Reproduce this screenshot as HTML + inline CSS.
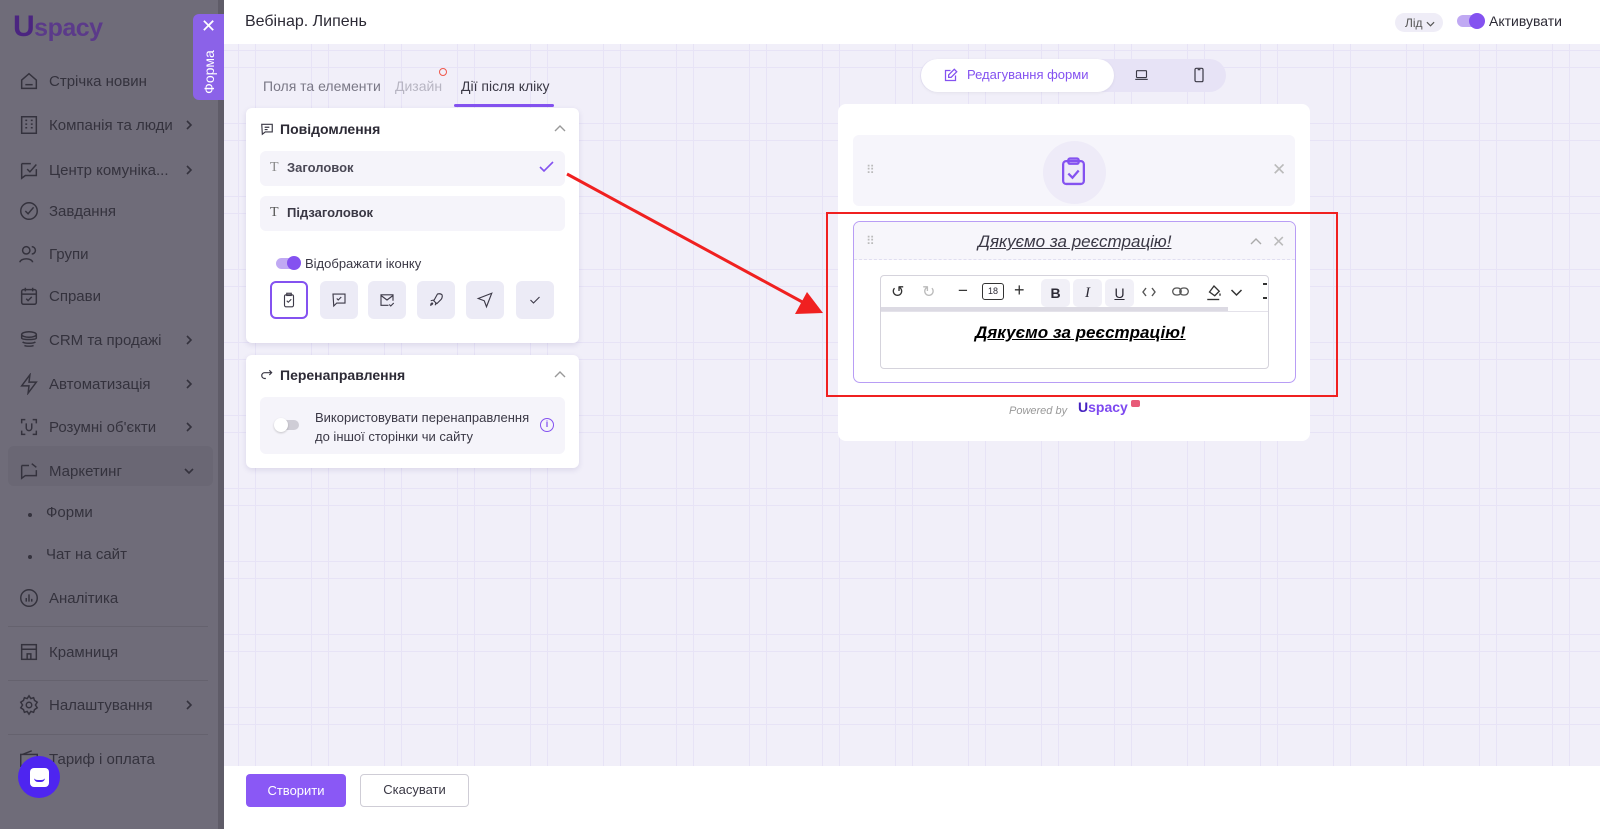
<!DOCTYPE html>
<html><head><meta charset="utf-8">
<style>
*{box-sizing:border-box;margin:0;padding:0}
body{width:1600px;height:829px;overflow:hidden;font-family:"Liberation Sans","Noto Sans CJK SC",sans-serif;background:#f1eff9;position:relative;color:#2c2a35}
.grid{position:absolute;left:224px;top:44px;right:0;bottom:0;
background-image:
linear-gradient(90deg,transparent 13px,#e7e3f6 13px,#e7e3f6 14px,transparent 14px,transparent 30px,#e7e3f6 30px,#e7e3f6 31px,transparent 31px),
linear-gradient(180deg,transparent 12px,#e7e3f6 12px,#e7e3f6 13px,transparent 13px,transparent 29px,#e7e3f6 29px,#e7e3f6 30px,transparent 30px);
background-size:73px 73px;background-position:1px 0,0 -6px}
.side{position:absolute;left:0;top:0;width:224px;height:829px;background:#6f6c79;color:#34323d;font-size:15px}
.side .scroll{position:absolute;left:218px;top:0;width:6px;height:829px;background:#5f5c68}
.nav{position:absolute;left:18px;display:flex;align-items:center;gap:9px}
.nav svg{width:22px;height:22px;stroke:#34323d;fill:none;stroke-width:1.6}
.chev{position:absolute;left:183px;width:12px;height:12px}
.sep{position:absolute;left:8px;width:200px;height:1px;background:#65626e}
.tabform{position:absolute;left:193px;top:14px;width:31px;height:86px;background:#8b62e8;border-radius:6px 0 0 6px;color:#fff}
.header{position:absolute;left:224px;top:0;right:0;height:44px;background:#fff}
.panel{position:absolute;background:#fff;border-radius:6px;box-shadow:0 2px 6px rgba(60,40,120,.12)}
.row{position:absolute;background:#f5f4fa;border-radius:6px}
.ib{position:absolute;top:281px;width:38px;height:38px;border-radius:6px;background:#ecebf6;display:flex;align-items:center;justify-content:center}
.ib svg{width:18px;height:18px;stroke:#3d3a48;fill:none;stroke-width:1.5}
.bot{position:absolute;left:224px;top:766px;right:0;height:63px;background:#fff}
</style></head><body>
<div class="grid"></div>
<div class="header">
 <div style="position:absolute;left:21px;top:13px;font-size:16px;color:#2c2a35">Вебінар. Липень</div>
 <div style="position:absolute;left:1171px;top:13px;width:48px;height:19px;border-radius:10px;background:#efedf7;font-size:12px;color:#555;padding:3px 0 0 10px">Лід <svg width="9" height="6" viewBox="0 0 10 6" fill="none" stroke="#555" stroke-width="1.3"><path d="M1 1l4 4 4-4"/></svg></div>
 <div style="position:absolute;left:1233px;top:15px;width:26px;height:12px;border-radius:6px;background:#c0a9f3"></div>
 <div style="position:absolute;left:1245px;top:13px;width:16px;height:16px;border-radius:50%;background:#8452f0"></div>
 <div style="position:absolute;left:1265px;top:13px;font-size:14px;color:#2c2a35">Активувати</div>
</div>

<div class="side">
 <div style="position:absolute;left:13px;top:10px;font-size:25px;font-weight:bold;color:#4a2a7c;letter-spacing:-0.5px"><span style="font-size:30px;color:#4b2580">U</span><span style="color:#5b3a8a">spacy</span></div>
 <div class="nav" style="top:70px"><svg viewBox="0 0 24 24"><path d="M4 11l8-7 8 7v9H4z"/><path d="M8 16h8"/></svg>Стрічка новин</div>
 <div class="nav" style="top:114px"><svg viewBox="0 0 24 24"><rect x="4" y="3" width="16" height="18"/><path d="M8 7h2M14 7h2M8 11h2M14 11h2M8 15h2M14 15h2"/></svg>Компанія та люди</div><svg class="chev" style="top:119px" viewBox="0 0 12 12" fill="none" stroke="#34323d" stroke-width="1.6"><path d="M4 2l4 4-4 4"/></svg>
 <div class="nav" style="top:159px"><svg viewBox="0 0 24 24"><path d="M4 5h10M4 5v16l4-3h12V11"/><path d="M10 11l3 3 7-8"/></svg>Центр комуніка...</div><svg class="chev" style="top:164px" viewBox="0 0 12 12" fill="none" stroke="#34323d" stroke-width="1.6"><path d="M4 2l4 4-4 4"/></svg>
 <div class="nav" style="top:200px"><svg viewBox="0 0 24 24"><circle cx="12" cy="12" r="9"/><path d="M8 12l3 3 6-7"/></svg>Завдання</div>
 <div class="nav" style="top:243px"><svg viewBox="0 0 24 24"><circle cx="9" cy="8" r="4"/><path d="M2 21c1-5 13-5 14 0M15 4a4 4 0 010 8"/></svg>Групи</div>
 <div class="nav" style="top:285px"><svg viewBox="0 0 24 24"><rect x="4" y="5" width="16" height="16" rx="2"/><path d="M8 3v4M16 3v4M4 10h16M9 15l2 2 4-4"/></svg>Справи</div>
 <div class="nav" style="top:329px"><svg viewBox="0 0 24 24"><ellipse cx="12" cy="6" rx="8" ry="3"/><path d="M4 6v4c0 2 16 2 16 0V6M5 14c2 2 12 2 14 0M7 18c2 1 8 1 10 0"/></svg>CRM та продажі</div><svg class="chev" style="top:334px" viewBox="0 0 12 12" fill="none" stroke="#34323d" stroke-width="1.6"><path d="M4 2l4 4-4 4"/></svg>
 <div class="nav" style="top:373px"><svg viewBox="0 0 24 24"><path d="M13 2L4 14h8l-1 8 9-12h-8z"/></svg>Автоматизація</div><svg class="chev" style="top:378px" viewBox="0 0 12 12" fill="none" stroke="#34323d" stroke-width="1.6"><path d="M4 2l4 4-4 4"/></svg>
 <div class="nav" style="top:416px"><svg viewBox="0 0 24 24"><path d="M4 8V4h4M16 4h4v4M20 16v4h-4M8 20H4v-4M9 8v5a3 3 0 006 0V8"/></svg>Розумні об'єкти</div><svg class="chev" style="top:421px" viewBox="0 0 12 12" fill="none" stroke="#34323d" stroke-width="1.6"><path d="M4 2l4 4-4 4"/></svg>
 <div style="position:absolute;left:8px;top:446px;width:205px;height:40px;background:#6a6774;border-radius:6px"></div>
 <div class="nav" style="top:460px"><svg viewBox="0 0 24 24"><path d="M4 6h8M4 6v14l4-3h12v-6"/><path d="M15 4l5 4"/></svg>Маркетинг</div><svg class="chev" style="top:465px" viewBox="0 0 12 12" fill="none" stroke="#34323d" stroke-width="1.6"><path d="M2 4l4 4 4-4"/></svg>
 <div style="position:absolute;left:28px;top:513px;width:4px;height:4px;border-radius:50%;background:#34323d"></div><div style="position:absolute;left:46px;top:504px">Форми</div>
 <div style="position:absolute;left:28px;top:555px;width:4px;height:4px;border-radius:50%;background:#34323d"></div><div style="position:absolute;left:46px;top:546px">Чат на сайт</div>
 <div class="nav" style="top:587px"><svg viewBox="0 0 24 24"><circle cx="12" cy="12" r="9"/><path d="M9 16v-4M12 16V8M15 16v-3"/></svg>Аналітика</div>
 <div class="sep" style="top:626px"></div>
 <div class="nav" style="top:641px"><svg viewBox="0 0 24 24"><rect x="4" y="4" width="16" height="16"/><path d="M4 9h16M10 20v-6h4v6"/></svg>Крамниця</div>
 <div class="sep" style="top:680px"></div>
 <div class="nav" style="top:694px"><svg viewBox="0 0 24 24"><circle cx="12" cy="12" r="3"/><path d="M12 2l2 3 3-1 1 3 3 2-2 3 2 3-3 2-1 3-3-1-2 3-2-3-3 1-1-3-3-2 2-3-2-3 3-2 1-3 3 1z"/></svg>Налаштування</div><svg class="chev" style="top:699px" viewBox="0 0 12 12" fill="none" stroke="#34323d" stroke-width="1.6"><path d="M4 2l4 4-4 4"/></svg>
 <div class="sep" style="top:734px"></div>
 <div class="nav" style="top:748px"><svg viewBox="0 0 24 24"><rect x="3" y="7" width="18" height="13"/><path d="M5 7l10-4"/></svg>Тариф і оплата</div>
 <div style="position:absolute;left:18px;top:756px;width:42px;height:42px;border-radius:50%;background:#4e25f0;display:flex;align-items:center;justify-content:center"><div style="width:19px;height:19px;background:#fff;border-radius:4px;position:relative"><div style="position:absolute;left:4px;top:10px;width:11px;height:4px;border-bottom:2px solid #4e25f0;border-radius:0 0 6px 6px"></div></div></div>
 <div class="scroll"></div>
</div>
<div class="tabform">
 <div style="position:absolute;left:8px;top:2px;font-size:18px">✕</div>
 <div style="position:absolute;left:-14px;top:50px;transform:rotate(-90deg);font-size:14px;width:60px;text-align:center">Форма</div>
</div>

<!-- tabs -->
<div style="position:absolute;left:263px;top:78px;font-size:14px;color:#7a7886">Поля та елементи</div>
<div style="position:absolute;left:395px;top:78px;font-size:14px;color:#b7b5c2">Дизайн</div>
<div style="position:absolute;left:439px;top:68px;width:8px;height:8px;border:1.5px solid #f0584b;border-radius:50%"></div>
<div style="position:absolute;left:461px;top:78px;font-size:14px;color:#3a3845">Дії після кліку</div>
<div style="position:absolute;left:454px;top:104px;width:100px;height:3px;background:#8452f0;border-radius:2px"></div>

<div class="panel" style="left:246px;top:108px;width:333px;height:235px">
 <svg style="position:absolute;left:14px;top:14px" width="14" height="14" viewBox="0 0 24 24" fill="none" stroke="#3a3845" stroke-width="2"><path d="M3 4h18v13H9l-5 4z"/><path d="M8 9h8M8 13h5"/></svg>
 <div style="position:absolute;left:34px;top:13px;font-size:14px;font-weight:bold;color:#2c2a35">Повідомлення</div>
 <svg style="position:absolute;left:308px;top:16px" width="12" height="8" viewBox="0 0 12 8" fill="none" stroke="#999" stroke-width="1.4"><path d="M1 7l5-5 5 5"/></svg>
 <div class="row" style="left:14px;top:43px;width:305px;height:35px"><span style="position:absolute;left:10px;top:9px;font-family:'Liberation Serif',serif;color:#888;font-size:14px">T</span><span style="position:absolute;left:27px;top:9px;font-size:13px;font-weight:bold;color:#4a4855">Заголовок</span><svg style="position:absolute;left:279px;top:10px" width="15" height="12" viewBox="0 0 15 12" fill="none" stroke="#8452f0" stroke-width="1.6"><path d="M1 6l4 4 9-9"/></svg></div>
 <div class="row" style="left:14px;top:88px;width:305px;height:35px"><span style="position:absolute;left:10px;top:9px;font-family:'Liberation Serif',serif;color:#555;font-size:14px">T</span><span style="position:absolute;left:27px;top:9px;font-size:13px;font-weight:bold;color:#3a3845">Підзаголовок</span></div>
 <div style="position:absolute;left:30px;top:150px;width:24px;height:11px;border-radius:6px;background:#c0a9f3"></div>
 <div style="position:absolute;left:41px;top:148px;width:14px;height:14px;border-radius:50%;background:#8452f0"></div>
 <div style="position:absolute;left:59px;top:148px;font-size:13px;color:#3a3845">Відображати іконку</div>
</div>
<div class="ib" style="left:270px;background:#fff;border:2px solid #8452f0"><svg viewBox="0 0 24 24"><rect x="6" y="5" width="12" height="16" rx="2"/><rect x="9" y="3" width="6" height="3"/><path d="M9 13l2 2 4-4"/></svg></div>
<div class="ib" style="left:320px"><svg viewBox="0 0 24 24"><path d="M4 4h16v12H9l-4 4z"/><path d="M9 10l2 2 4-4"/></svg></div>
<div class="ib" style="left:368px"><svg viewBox="0 0 24 24"><path d="M20 13V5H4v14h10"/><path d="M4 6l8 6 8-6M15 18l2 2 4-4"/></svg></div>
<div class="ib" style="left:417px"><svg viewBox="0 0 24 24"><path d="M14 4c4-1 6 1 6 1s1 3-1 6l-6 6-4-4z"/><path d="M9 12l-4 1M12 15l-1 4M5 19c0-2 1-3 2-3s1 2-2 3z"/></svg></div>
<div class="ib" style="left:466px"><svg viewBox="0 0 24 24"><path d="M21 3L3 10l8 3 3 8z"/></svg></div>
<div class="ib" style="left:516px"><svg viewBox="0 0 24 24"><path d="M6 12l4 4 8-8"/></svg></div>

<div class="panel" style="left:246px;top:355px;width:333px;height:113px">
 <svg style="position:absolute;left:14px;top:13px" width="14" height="14" viewBox="0 0 24 24" fill="none" stroke="#3a3845" stroke-width="2"><path d="M20 8H8a5 5 0 000 10h2M16 4l4 4-4 4"/></svg>
 <div style="position:absolute;left:34px;top:12px;font-size:14px;font-weight:bold;color:#2c2a35">Перенаправлення</div>
 <svg style="position:absolute;left:308px;top:15px" width="12" height="8" viewBox="0 0 12 8" fill="none" stroke="#999" stroke-width="1.4"><path d="M1 7l5-5 5 5"/></svg>
 <div class="row" style="left:14px;top:42px;width:305px;height:57px">
  <div style="position:absolute;left:17px;top:23px;width:22px;height:10px;border-radius:5px;background:#cfcdd6"></div>
  <div style="position:absolute;left:14px;top:21px;width:14px;height:14px;border-radius:50%;background:#fff;box-shadow:0 1px 2px rgba(0,0,0,.2)"></div>
  <div style="position:absolute;left:55px;top:11px;font-size:13px;color:#3a3845;line-height:19px">Використовувати перенаправлення<br>до іншої сторінки чи сайту</div>
  <div style="position:absolute;left:280px;top:21px;width:14px;height:14px;border:1.5px solid #8452f0;border-radius:50%;font-size:9px;color:#8452f0;text-align:center;line-height:11px;font-weight:bold">i</div>
 </div>
</div>

<!-- preview toolbar -->
<div style="position:absolute;left:920px;top:59px;width:306px;height:33px;border-radius:17px;background:#e7e3f6"></div>
<div style="position:absolute;left:921px;top:59px;width:193px;height:33px;border-radius:17px;background:#fff;box-shadow:0 1px 3px rgba(0,0,0,.06)">
 <svg style="position:absolute;left:22px;top:9px" width="15" height="15" viewBox="0 0 24 24" fill="none" stroke="#8452f0" stroke-width="2"><path d="M12 4H4v16h16v-8"/><path d="M18 2l4 4-9 9H9v-4z"/></svg>
 <div style="position:absolute;left:46px;top:8px;font-size:13px;color:#8452f0">Редагування форми</div>
</div>
<svg style="position:absolute;left:1134px;top:68px" width="15" height="14" viewBox="0 0 24 20" fill="none" stroke="#3a3845" stroke-width="1.8"><rect x="4" y="3" width="16" height="11" rx="1"/><path d="M2 17h20"/></svg>
<svg style="position:absolute;left:1192px;top:67px" width="14" height="16" viewBox="0 0 20 24" fill="none" stroke="#3a3845" stroke-width="1.8"><rect x="4" y="2" width="12" height="20" rx="2"/><path d="M8 4h4"/></svg>

<div style="position:absolute;left:838px;top:104px;width:472px;height:337px;background:#fff;border-radius:8px"></div>
<div style="position:absolute;left:853px;top:135px;width:442px;height:71px;background:#f6f5fb;border-radius:6px"></div>
<div style="position:absolute;left:866px;top:163px;color:#bbb;font-size:12px;letter-spacing:-1px">⠿</div>
<div style="position:absolute;left:1043px;top:141px;width:63px;height:63px;border-radius:50%;background:#eeebf8"></div>
<svg style="position:absolute;left:1061px;top:157px" width="25" height="29" viewBox="0 0 24 28" fill="none" stroke="#8452f0" stroke-width="2.2"><rect x="2" y="4" width="20" height="22" rx="3"/><rect x="7" y="1.5" width="10" height="5" rx="1.5"/><path d="M7 16l4 4 6-7"/></svg>
<div style="position:absolute;left:1272px;top:160px;font-size:17px;color:#bbb">✕</div>

<div style="position:absolute;left:853px;top:221px;width:443px;height:162px;border:1.5px solid #b89df5;border-radius:7px;background:#fff"></div>
<div style="position:absolute;left:854px;top:222px;width:441px;height:38px;background:#f7f6fb;border-bottom:1px dashed #e0def0;border-radius:6px 6px 0 0"></div>
<div style="position:absolute;left:866px;top:234px;color:#bbb;font-size:12px">⠿</div>
<div style="position:absolute;left:978px;top:232px;font-size:17px;font-style:italic;text-decoration:underline;color:#3a3845">Дякуємо за реєстрацію!</div>
<svg style="position:absolute;left:1250px;top:237px" width="12" height="8" viewBox="0 0 12 8" fill="none" stroke="#aaa" stroke-width="1.4"><path d="M1 7l5-5 5 5"/></svg>
<div style="position:absolute;left:1272px;top:232px;font-size:16px;color:#bbb">✕</div>
<div style="position:absolute;left:880px;top:275px;width:389px;height:94px;border:1px solid #d5d3dc;border-radius:4px;background:#fff"></div>
<div style="position:absolute;left:881px;top:307px;width:347px;height:4px;background:#dcdae3"></div>
<div style="position:absolute;left:881px;top:311px;width:387px;height:1px;background:#e4e2ea"></div>
<div style="position:absolute;left:891px;top:282px;font-size:16px;color:#333">↺</div>
<div style="position:absolute;left:922px;top:282px;font-size:16px;color:#bbb">↻</div>
<div style="position:absolute;left:958px;top:281px;font-size:17px;color:#333">−</div>
<div style="position:absolute;left:982px;top:283px;width:22px;height:17px;border:1.5px solid #333;border-radius:3px;font-size:9px;text-align:center;line-height:14px">18</div>
<div style="position:absolute;left:1014px;top:280px;font-size:18px;color:#333">+</div>
<div style="position:absolute;left:1041px;top:279px;width:29px;height:28px;background:#f1f0f7;border-radius:5px;text-align:center;line-height:28px;font-weight:bold;font-size:14px">B</div>
<div style="position:absolute;left:1073px;top:279px;width:29px;height:28px;background:#f1f0f7;border-radius:5px;text-align:center;line-height:28px;font-style:italic;font-family:'Liberation Serif',serif;font-size:15px">I</div>
<div style="position:absolute;left:1105px;top:279px;width:29px;height:28px;background:#f1f0f7;border-radius:5px;text-align:center;line-height:28px;text-decoration:underline;font-size:14px">U</div>
<svg style="position:absolute;left:1142px;top:287px" width="14" height="10" viewBox="0 0 14 10" fill="none" stroke="#555" stroke-width="1.4"><path d="M4 1L1 5l3 4M10 1l3 4-3 4"/></svg>
<svg style="position:absolute;left:1172px;top:287px" width="17" height="9" viewBox="0 0 24 12" fill="none" stroke="#555" stroke-width="1.8"><rect x="1" y="1" width="12" height="10" rx="5"/><rect x="11" y="1" width="12" height="10" rx="5"/></svg>
<svg style="position:absolute;left:1205px;top:283px" width="18" height="18" viewBox="0 0 24 24" fill="none" stroke="#333" stroke-width="1.8"><path d="M6 12l6-8 7 7-6 6z"/><path d="M20 14v3"/><path d="M3 22h16"/></svg>
<svg style="position:absolute;left:1230px;top:289px" width="13" height="8" viewBox="0 0 12 8" fill="none" stroke="#333" stroke-width="1.5"><path d="M1 1l5 5 5-5"/></svg>
<div style="position:absolute;left:1263px;top:283px;width:4px;height:16px;border-top:2px solid #333;border-bottom:2px solid #333"></div>
<div style="position:absolute;left:975px;top:323px;font-size:17px;font-weight:bold;font-style:italic;text-decoration:underline;color:#000">Дякуємо за реєстрацію!</div>
<div style="position:absolute;left:1009px;top:405px;font-size:11px;font-style:italic;color:#999">Powered by</div>
<div style="position:absolute;left:1078px;top:399px;font-size:14px;font-weight:bold;color:#5b2ee8"><span style="color:#4522c0">U</span><span style="color:#7d48f0">spacy</span></div>
<div style="position:absolute;left:1131px;top:400px;width:9px;height:7px;background:#e85a78;border-radius:2px"></div>

<!-- red annotations -->
<div style="position:absolute;left:826px;top:212px;width:512px;height:185px;border:2px solid #f02020"></div>
<svg style="position:absolute;left:0;top:0" width="1600" height="829"><line x1="567" y1="174" x2="806" y2="304" stroke="#f02020" stroke-width="3"/><polygon points="823,313 795,314 807,292" fill="#f02020"/></svg>

<div class="bot">
 <div style="position:absolute;left:22px;top:8px;width:100px;height:33px;background:#8a58f5;border-radius:4px;color:#fff;font-size:13px;text-align:center;line-height:33px">Створити</div>
 <div style="position:absolute;left:136px;top:8px;width:109px;height:33px;border:1.5px solid #cfcdd6;border-radius:4px;color:#3a3845;font-size:13px;text-align:center;line-height:30px;background:#fff">Скасувати</div>
</div>
</body></html>
